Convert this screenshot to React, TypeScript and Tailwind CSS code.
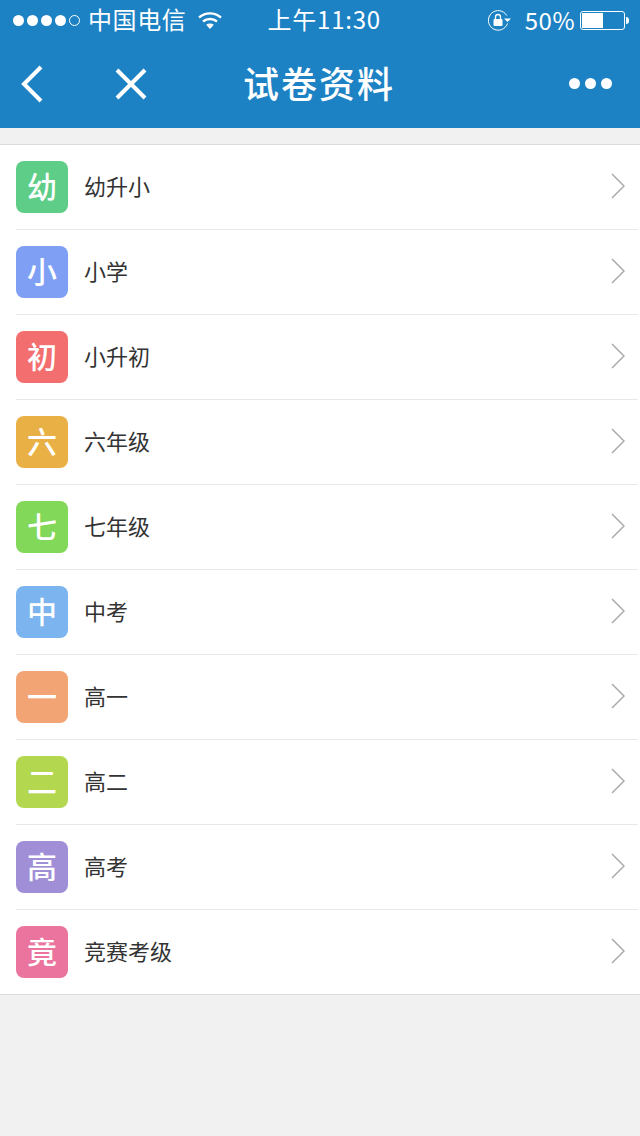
const rows = [
  { icon: "幼", label: "幼升小", color: "bg-[#5dcd87]" },
  { icon: "小", label: "小学", color: "bg-[#7f9ff5]" },
  { icon: "初", label: "小升初", color: "bg-[#f36f6f]" },
  { icon: "六", label: "六年级", color: "bg-[#e9b145]" },
  { icon: "七", label: "七年级", color: "bg-[#82d858]" },
  { icon: "中", label: "中考", color: "bg-[#7bb4ee]" },
  { icon: "一", label: "高一", color: "bg-[#f2a474]" },
  { icon: "二", label: "高二", color: "bg-[#b3d850]" },
  { icon: "高", label: "高考", color: "bg-[#a08fd6]" },
  { icon: "竟", label: "竞赛考级", color: "bg-[#ea749e]" },
];

const StatusBar = () => (
  <div className="flex h-10 items-center text-white">
    <div className="flex items-center gap-[3px] pl-[13px]">
      {[0, 1, 2, 3].map((i) => (
        <span key={i} className="h-[11px] w-[11px] rounded-full bg-white" />
      ))}
      <span className="h-[11px] w-[11px] rounded-full border border-white" />
    </div>
    <span className="ml-[8px] pb-[2px] text-[24px] leading-none tracking-[0.6px]">中国电信</span>
    <svg width="26" height="20" viewBox="0 0 26 20" className="ml-[11px]" fill="none" stroke="white" strokeWidth="2.4">
      <path d="M2 7.5c6.500-5.500 15.500-5.500 22 0" />
      <path d="M6 11.500c4-3.300 10-3.300 14 0" />
      <path d="M13 19l-3.800-4.200c2.200-1.700 5.400-1.700 7.600 0z" fill="white" stroke="none" />
    </svg>
    <span className="ml-[44px] pb-[2px] text-[24px] leading-none tracking-[0.8px]">上午11:30</span>
    <svg width="26" height="24" viewBox="0 0 26 24" className="ml-auto" fill="none" stroke="white" strokeWidth="1">
      <path d="M20.500 15.500a9.800 9.800 0 1 1-.8-8" />
      <path d="M17 10.500h7l-3.500 3.500z" fill="white" stroke="none" />
      <rect x="6.500" y="11" width="9" height="7" rx="1" fill="white" stroke="none" />
      <path d="M8.500 11V9a2.500 2.500 0 0 1 5 0v2" strokeWidth="1.300" />
    </svg>
    <span className="ml-[12px] pb-[1px] text-[24px] leading-none tracking-[0.5px]">50%</span>
    <div className="ml-[5px] mr-[11px] flex items-center">
      <div className="h-[19px] w-[45px] rounded-[3px] border border-white p-[1px]">
        <div className="h-full w-[21px] bg-white" />
      </div>
      <div className="ml-[1px] h-[7px] w-[3px] rounded-r-sm bg-white" />
    </div>
  </div>
);

const NavBar = () => (
  <div className="flex h-[88px] items-center pb-[1px]">
    <svg width="24" height="38" viewBox="0 0 24 38" className="ml-[20px]" fill="none" stroke="white" strokeWidth="4">
      <path d="M21 2L4 19l17 17" />
    </svg>
    <svg width="32" height="32" viewBox="0 0 32 32" className="ml-[71px]" fill="none" stroke="white" strokeWidth="4">
      <path d="M2 2l28 28M30 2L2 30" />
    </svg>
    <h1 className="ml-[96px] pb-[4px] text-[36px] leading-none font-medium tracking-[2px] text-white">试卷资料</h1>
    <div className="ml-auto mr-[28px] flex gap-[5px]">
      <span className="h-[11px] w-[11px] rounded-full bg-white" />
      <span className="h-[11px] w-[11px] rounded-full bg-white" />
      <span className="h-[11px] w-[11px] rounded-full bg-white" />
    </div>
  </div>
);

const App = () => {
  return (
    <div
      className="flex min-h-[1136px] flex-col bg-[#f1f1f1]"
      style={{ fontFamily: '"Noto Sans CJK SC", "Liberation Sans", sans-serif' }}
    >
      <header className="bg-[#1d82c4]">
        <StatusBar />
        <NavBar />
      </header>
      <ul className="mt-4 border-y border-[#dcdcdc] bg-white">
        {rows.map((row, i) => (
          <li key={row.label} className="pl-4 pr-[2px]">
            <div className={`flex items-center ${i < rows.length - 1 ? "h-[85px] border-b border-[#e8e8e8]" : "h-[84px]"}`}>
              <div
                className={`flex h-[52px] w-[52px] items-center justify-center rounded-lg pb-[4px] text-[30px] leading-none font-medium text-white ${row.color}`}
              >
                {row.icon}
              </div>
              <span className="ml-4 pb-[4px] text-[22px] leading-none text-[#333333]">{row.label}</span>
              <svg width="14" height="26" viewBox="0 0 14 26" className="ml-auto mb-[3px] mr-[13px]" fill="none" stroke="#aaaaaa" strokeWidth="1.500">
                <path d="M1 1l12 12L1 25" />
              </svg>
            </div>
          </li>
        ))}
      </ul>
    </div>
  );
};

export default App;
